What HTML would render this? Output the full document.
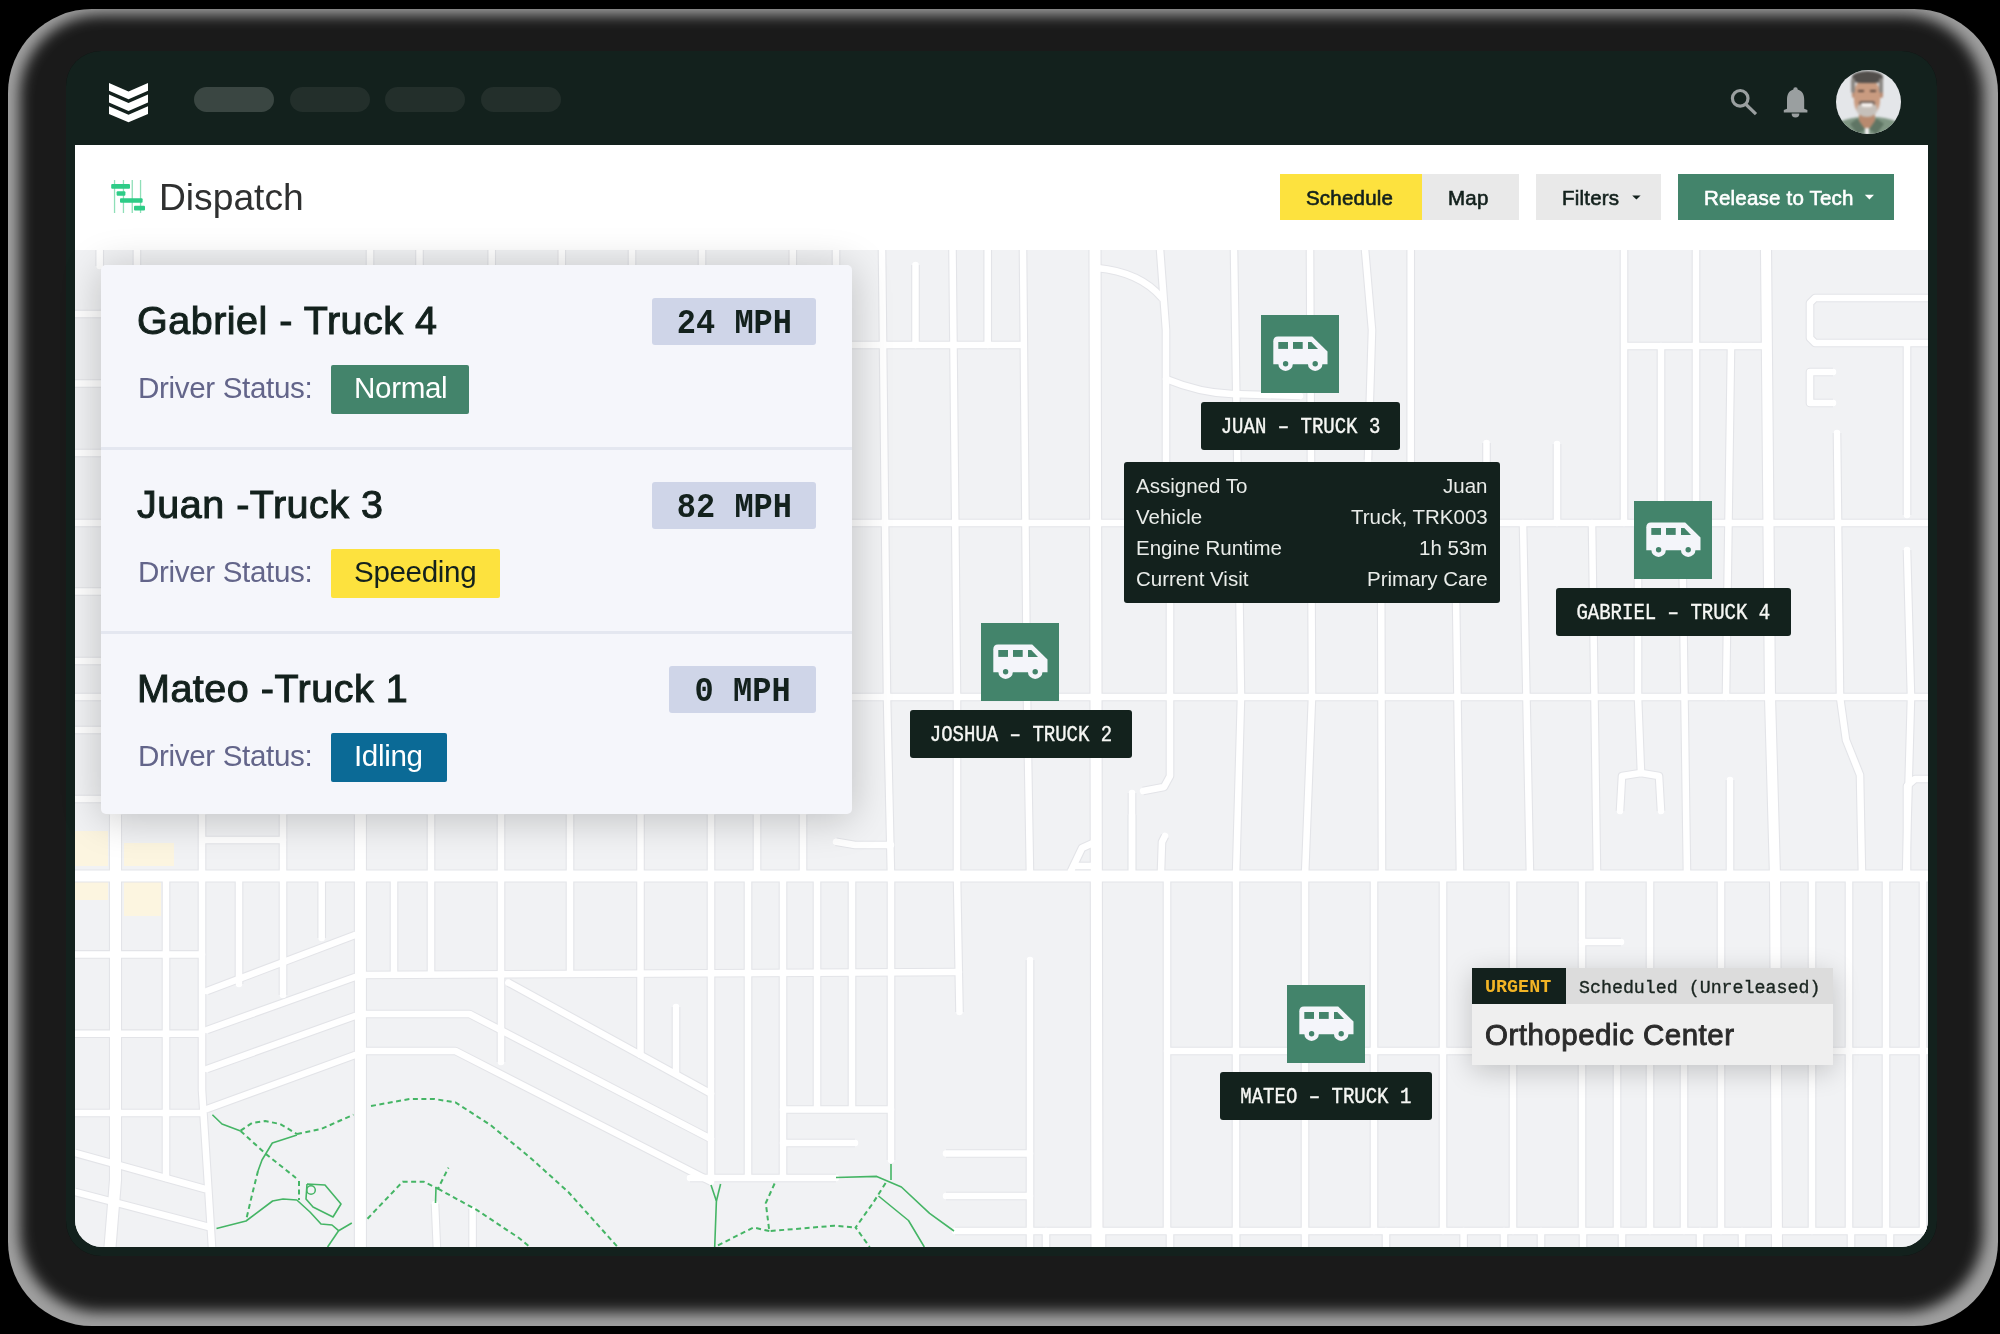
<!DOCTYPE html>
<html><head><meta charset="utf-8">
<style>
html,body{margin:0;padding:0;}
body{width:2000px;height:1334px;background:#000;position:relative;overflow:hidden;font-family:"Liberation Sans",sans-serif;}
.abs{position:absolute;}
.t{position:absolute;white-space:nowrap;line-height:1;will-change:transform;}
#shadow{left:8px;top:9px;width:1990px;height:1317px;border-radius:84px;background:#a0a0a0;overflow:hidden;}
#shadow .in{position:absolute;left:58px;top:42px;width:1871px;height:1205px;border-radius:35px;background:#0f0f0f;box-shadow:0 10px 14px 46px rgba(0,0,0,.84);}
#frame{left:66px;top:51px;width:1871px;height:1205px;border-radius:35px;background:#13211d;}
#content{left:75px;top:145px;width:1853px;height:1102px;border-radius:0 0 27px 27px;background:#f1f2f4;overflow:hidden;}
.pill{position:absolute;top:87px;width:80px;height:25px;border-radius:13px;background:#232f2b;}
.mono{font-family:"Liberation Mono",monospace;}
.btn{position:absolute;top:174px;height:46px;}
.trk{position:absolute;width:78px;height:78px;background:#43846b;}
.trk svg{position:absolute;left:0;top:0;}
.lbl{position:absolute;height:47.6px;background:#13221d;border-radius:3px;}
.lbl span{will-change:transform;position:absolute;left:0;right:0;top:2px;height:47px;line-height:47px;text-align:center;color:#f6f7f4;-webkit-text-stroke:0.35px #f6f7f4;font-family:"Liberation Mono",monospace;font-size:19px;transform:scaleY(1.14);}
.badge{position:absolute;border-radius:2px;}
.ttl{color:#13211d;font-size:39.5px;-webkit-text-stroke:1px #13211d;letter-spacing:0.5px;}
.ds{color:#63658a;font-size:29.6px;letter-spacing:-0.35px;}
.spd{position:absolute;background:#cfd5e8;border-radius:3px;height:47px;}
.spd span{will-change:transform;position:absolute;left:0;right:0;top:1.5px;line-height:47px;transform:scaleY(1.12);text-align:center;font-family:"Liberation Mono",monospace;font-weight:bold;font-size:32px;color:#13211d;}
.tt{color:#e9ece9;font-size:20.5px;}
</style></head>
<body>
<svg width="0" height="0" style="position:absolute">
 <defs>
  <symbol id="van" viewBox="0 0 78 78">
   <path fill="#f4f5fa" d="M12.3,26.3 Q12.3,21.6 17,21.6 L51.2,21.6 L66.5,36.6 L66.5,49.3 L12.3,49.3 Z"/>
   <circle cx="24.6" cy="48.7" r="7.3" fill="#f4f5fa"/>
   <circle cx="54.2" cy="48.7" r="7.3" fill="#f4f5fa"/>
   <circle cx="24.6" cy="48.7" r="2.7" fill="#43846b"/>
   <circle cx="54.2" cy="48.7" r="2.7" fill="#43846b"/>
   <rect x="17.3" y="27" width="9.7" height="6.9" fill="#43846b"/>
   <rect x="32" y="27" width="9.7" height="6.9" fill="#43846b"/>
   <path fill="#43846b" d="M47,27 L50.3,27 L57,33.9 L47,33.9 Z"/>
  </symbol>
 </defs>
</svg>
<div id="shadow" class="abs"><div class="in"></div></div>
<div id="frame" class="abs"></div>
<!-- nav -->
<svg class="abs" style="left:0;top:0" width="200" height="140">
  <g fill="#fff">
    <polygon points="109,83 128.5,91.5 148,83 148,90.8 128.5,99.3 109,90.8"/>
    <polygon points="109,94.6 128.5,103.1 148,94.6 148,102.4 128.5,110.9 109,102.4"/>
    <polygon points="109,106.2 128.5,114.7 148,106.2 148,114 128.5,122.2 109,114"/>
  </g>
</svg>
<div class="pill" style="left:194px;background:#3a4642"></div>
<div class="pill" style="left:290px"></div>
<div class="pill" style="left:385px"></div>
<div class="pill" style="left:481px"></div>
<!-- search / bell -->
<svg class="abs" style="left:1720px;top:70px" width="100" height="60" viewBox="1720 70 100 60">
  <circle cx="1740.2" cy="98.3" r="7.8" fill="none" stroke="#9a9fa0" stroke-width="3.2"/>
  <line x1="1745.5" y1="104" x2="1756" y2="114.2" stroke="#9a9fa0" stroke-width="3.2"/>
  <path fill="#9a9fa0" d="M1795.5,87.3 a2.2,2.2 0 0 1 2.2,2.3 C1802.5,91 1804.2,95 1804.2,100 L1804.2,108.8 L1807.4,110 L1807.4,112.6 L1783.8,112.6 L1783.8,110 L1787,108.8 L1787,100 C1787,95 1788.6,91 1793.3,89.6 a2.2,2.2 0 0 1 2.2,-2.3 Z"/>
  <path fill="#9a9fa0" d="M1791.6,113.6 L1799.4,113.6 A3.9,3.9 0 0 1 1791.6,113.6 Z"/>
</svg>
<!-- avatar -->
<div class="abs" style="left:1836px;top:69.5px;width:64.6px;height:64.6px;border-radius:50%;overflow:hidden;background:#e4e6e9;">
 <div class="abs" style="left:0;top:0;width:65px;height:65px;filter:blur(0.8px);">
  <div class="abs" style="left:-6px;top:47px;width:77px;height:36px;border-radius:45% 45% 0 0;background:#7f9683;"></div>
  <div class="abs" style="left:23px;top:42px;width:16px;height:16px;background:#b88a6f;"></div>
  <div class="abs" style="left:17px;top:50px;width:9px;height:13px;background:#5f7564;transform:rotate(-35deg);"></div>
  <div class="abs" style="left:36px;top:50px;width:9px;height:13px;background:#5f7564;transform:rotate(35deg);"></div>
  <div class="abs" style="left:29px;top:58px;width:4px;height:7px;background:#f0f0f0;"></div>
  <div class="abs" style="left:15.5px;top:19px;width:4px;height:9px;border-radius:2px;background:#b98c73;"></div>
  <div class="abs" style="left:42.5px;top:19px;width:4px;height:9px;border-radius:2px;background:#b98c73;"></div>
  <div class="abs" style="left:18px;top:8px;width:26px;height:38px;border-radius:45% 45% 42% 42%;background:#c99b80;"></div>
  <div class="abs" style="left:21px;top:34px;width:20px;height:13.5px;border-radius:25% 25% 50% 50%;background:#c6c0ba;"></div>
  <div class="abs" style="left:23px;top:31px;width:16px;height:4px;border-radius:2px;background:#6f5f57;"></div>
  <div class="abs" style="left:25px;top:33.5px;width:12px;height:4px;border-radius:1px 1px 4px 4px;background:#f4efec;"></div>
  <div class="abs" style="left:22px;top:20.5px;width:6px;height:2px;background:#5e4a40;"></div>
  <div class="abs" style="left:34px;top:20.5px;width:6px;height:2px;background:#5e4a40;"></div>
  <div class="abs" style="left:15.5px;top:1.5px;width:31px;height:12px;border-radius:50% 50% 30% 30%;background:#524e4b;"></div>
  <div class="abs" style="left:15px;top:8px;width:4px;height:15px;border-radius:2px;background:#8b8783;"></div>
  <div class="abs" style="left:43px;top:8px;width:4px;height:15px;border-radius:2px;background:#8b8783;"></div>
 </div>
</div>

<div id="content" class="abs">
<svg class="abs" style="left:0px;top:104px" width="1853" height="998" viewBox="75 249 1853 998">
<rect x="75" y="249" width="1853" height="998" fill="#f1f2f4"/>
<g fill="#fcf5e0"><rect x="75" y="831" width="33" height="35"/><rect x="124" y="843" width="50" height="23"/><rect x="75" y="879" width="33" height="21"/><rect x="124" y="879" width="37" height="37"/></g>
<g fill="none" stroke="#e3e4e8" stroke-linecap="butt" stroke-linejoin="round"><path d="M75,523 L1928,523" stroke-width="8.7"/><path d="M75,697 L1928,697" stroke-width="8.7"/><path d="M75,876 L1928,876" stroke-width="13.2"/><path d="M1167,1051 L1928,1051" stroke-width="8.7"/><path d="M955,1231 L1928,1231" stroke-width="8.7"/><path d="M852,345 L1020,345" stroke-width="8.7"/><path d="M1626,346 L1766,346" stroke-width="8.7"/><path d="M70,314 L110,314" stroke-width="8.7"/><path d="M70,383.5 L110,383.5" stroke-width="8.7"/><path d="M70,453 L110,453" stroke-width="8.7"/><path d="M70,591.5 L110,591.5" stroke-width="8.7"/><path d="M70,661 L110,661" stroke-width="8.7"/><path d="M70,730 L110,730" stroke-width="8.7"/><path d="M70,799 L110,799" stroke-width="8.7"/><path d="M1928,298 L1815,298 L1810,303 L1810,338 L1815,343 L1928,343" stroke-width="8.7"/><path d="M882,249 L887,697 L891,876 L891,1160" stroke-width="8.7"/><path d="M915.5,265 L915.5,345" stroke-width="8.7"/><path d="M952.5,249 L957,697 L957,876 L959.5,1012" stroke-width="8.7"/><path d="M987.7,249 L987.7,345" stroke-width="8.7"/><path d="M1023,249 L1027,697 L1030,876" stroke-width="8.7"/><path d="M1030,960 L1030,1247" stroke-width="8.7"/><path d="M1095,249 L1096,697 L1097,1247" stroke-width="13.2"/><path d="M1160,249 L1166,330 L1166,520" stroke-width="8.7"/><path d="M1170,523 L1170,776 L1164,787 L1143,791" stroke-width="8.7"/><path d="M1161,871 L1162,842 L1165,836" stroke-width="8.7"/><path d="M1071,871 L1082,848 L1093,843" stroke-width="8.7"/><path d="M1077,866 L1093,866" stroke-width="8.7"/><path d="M1132,793 L1132,871" stroke-width="8.7"/><path d="M1234,249 L1241,697 L1236,876 L1236,1247" stroke-width="8.7"/><path d="M1310,249 L1312,697 L1305,876 L1305,1247" stroke-width="8.7"/><path d="M1365,249 L1372,330 L1368,460" stroke-width="8.7"/><path d="M1381,523 L1382,876" stroke-width="8.7"/><path d="M1374,876 L1374,1231" stroke-width="8.7"/><path d="M1410.7,249 L1410.7,523" stroke-width="8.7"/><path d="M1455,523 L1460,876" stroke-width="8.7"/><path d="M1443,876 L1443,1231" stroke-width="8.7"/><path d="M1486.5,443 L1486.5,523" stroke-width="8.7"/><path d="M1523,523 L1530,876" stroke-width="8.7"/><path d="M1513,876 L1513,1231" stroke-width="8.7"/><path d="M1557,444 L1557,523" stroke-width="8.7"/><path d="M1592,523 L1597,876" stroke-width="8.7"/><path d="M1582,876 L1582,1231" stroke-width="8.7"/><path d="M1624,249 L1624,523" stroke-width="8.7"/><path d="M1638,523 L1638,697" stroke-width="8.7"/><path d="M1650,876 L1650,1231" stroke-width="8.7"/><path d="M1661,346 L1661,523" stroke-width="8.7"/><path d="M1682,523 L1687,876" stroke-width="8.7"/><path d="M1696,249 L1696,346" stroke-width="8.7"/><path d="M1721,876 L1721,1231" stroke-width="8.7"/><path d="M1731,346 L1726,697" stroke-width="8.7"/><path d="M1730,780 L1730,876" stroke-width="8.7"/><path d="M1620,811 L1622,776 L1641,773 L1659,776 L1661,811" stroke-width="8.7"/><path d="M1641,773 L1638,697" stroke-width="8.7"/><path d="M1766,249 L1770,697 L1775,876 L1777,1247" stroke-width="12.2"/><path d="M1812,876 L1812,1231" stroke-width="8.7"/><path d="M1837,433 L1840,697" stroke-width="8.7"/><path d="M1840,697 L1846,740 L1860,775 L1862,876" stroke-width="8.7"/><path d="M1907,876 L1907,786 L1915,779 L1928,779" stroke-width="8.7"/><path d="M1849,876 L1849,1231" stroke-width="8.7"/><path d="M1886,876 L1886,1231" stroke-width="8.7"/><path d="M1907,346 L1907,515" stroke-width="8.7"/><path d="M1907,550 L1911,697 L1906,876" stroke-width="8.7"/><path d="M1923,876 L1923,1231" stroke-width="8.7"/><path d="M1617,1051 L1617,1231" stroke-width="8.7"/><path d="M1167,876 L1167,1231" stroke-width="8.7"/><path d="M1582,942 L1621,942" stroke-width="8.7"/><path d="M1696,346 L1696,523" stroke-width="8.7"/><path d="M1833,372 L1810,372 L1810,403 L1833,403" stroke-width="8.7"/><path d="M1046,1231 L1046,1250" stroke-width="8.7"/><path d="M1102,1231 L1102,1250" stroke-width="8.7"/><path d="M1170,1231 L1170,1250" stroke-width="8.7"/><path d="M1236,1231 L1236,1250" stroke-width="8.7"/><path d="M1386,1231 L1386,1250" stroke-width="8.7"/><path d="M1463.6,1231 L1463.6,1250" stroke-width="8.7"/><path d="M1504,1231 L1504,1250" stroke-width="8.7"/><path d="M1541,1231 L1541,1250" stroke-width="8.7"/><path d="M1583,1231 L1583,1250" stroke-width="8.7"/><path d="M1622,1231 L1622,1250" stroke-width="8.7"/><path d="M1700,1231 L1700,1250" stroke-width="8.7"/><path d="M1742,1231 L1742,1250" stroke-width="8.7"/><path d="M1851,1231 L1851,1250" stroke-width="8.7"/><path d="M1890,1231 L1890,1250" stroke-width="8.7"/><path d="M1684,1051 L1684,1231" stroke-width="8.7"/><path d="M99.7,245 L99.7,266" stroke-width="8.7"/><path d="M136.9,245 L136.9,266" stroke-width="8.7"/><path d="M370,245 L370,266" stroke-width="8.7"/><path d="M419.5,245 L419.5,266" stroke-width="8.7"/><path d="M491.7,245 L491.7,266" stroke-width="8.7"/><path d="M561.8,245 L561.8,266" stroke-width="8.7"/><path d="M632,245 L632,266" stroke-width="8.7"/><path d="M702,245 L702,266" stroke-width="8.7"/><path d="M792.8,245 L792.8,266" stroke-width="8.7"/><path d="M836,245 L836,266" stroke-width="8.7"/><path d="M115.5,815 L115.5,1180 L110,1247" stroke-width="13.2"/><path d="M166,876 L166,1178" stroke-width="8.7"/><path d="M202,815 L202,1090 L212,1247" stroke-width="8.7"/><path d="M239,876 L239,984" stroke-width="8.7"/><path d="M283,815 L283,995" stroke-width="8.7"/><path d="M321.7,876 L321.7,938" stroke-width="8.7"/><path d="M360.4,815 L360.4,1247" stroke-width="13.2"/><path d="M394,876 L394,972" stroke-width="8.7"/><path d="M431,815 L431,972" stroke-width="8.7"/><path d="M501,815 L501,1062" stroke-width="8.7"/><path d="M570,815 L570,970" stroke-width="8.7"/><path d="M640.5,815 L640.5,1055" stroke-width="8.7"/><path d="M676,1007 L676,1072" stroke-width="8.7"/><path d="M711,815 L711,1178" stroke-width="8.7"/><path d="M748,876 L748,1175" stroke-width="8.7"/><path d="M783,876 L783,1175" stroke-width="8.7"/><path d="M817,876 L817,1108" stroke-width="8.7"/><path d="M852,876 L852,1108" stroke-width="8.7"/><path d="M757,815 L757,876" stroke-width="8.7"/><path d="M803,815 L803,876" stroke-width="8.7"/><path d="M1132,815 L1132,876" stroke-width="8.7"/><path d="M75,954.4 L202,954.4" stroke-width="8.7"/><path d="M75,1033.7 L202,1033.7" stroke-width="8.7"/><path d="M75,1113 L202,1113" stroke-width="8.7"/><path d="M205,840 L283,840" stroke-width="8.7"/><path d="M360,975 L959,972" stroke-width="8.7"/><path d="M783,1109.5 L891,1109.5" stroke-width="8.7"/><path d="M783,1143 L855,1143" stroke-width="8.7"/><path d="M946,1153.5 L1030,1153.5" stroke-width="8.7"/><path d="M690,1178 L836,1178" stroke-width="8.7"/><path d="M946,1196 L1030,1196" stroke-width="8.7"/><path d="M207,991 L355,935" stroke-width="8.7"/><path d="M207,1030 L355,977" stroke-width="8.7"/><path d="M207,1069 L355,1016" stroke-width="8.7"/><path d="M207,1109 L355,1055" stroke-width="8.7"/><path d="M75,1153 L205,1189" stroke-width="8.7"/><path d="M75,1192 L209,1227" stroke-width="8.7"/><path d="M508.4,982.6 L711,1093.6" stroke-width="8.7"/><path d="M366,1014 L469.6,1014 L711,1139" stroke-width="8.7"/><path d="M366,1051 L455.5,1051 L711,1181.7" stroke-width="8.7"/><path d="M836,841.7 L855,845 L891,845" stroke-width="8.7"/><path d="M435,1204 L437,1250" stroke-width="8.7"/><path d="M472.6,1209 L472.6,1250" stroke-width="8.7"/><path d="M1097,268 Q1140,272 1162,298" stroke-width="8.7"/><path d="M1166,379 Q1200,393 1232,394 L1300,396" stroke-width="8.7"/></g>
<g fill="none" stroke="#ffffff" stroke-linecap="round" stroke-linejoin="round"><path d="M75,523 L1928,523" stroke-width="6.5"/><path d="M75,697 L1928,697" stroke-width="6.5"/><path d="M75,876 L1928,876" stroke-width="11"/><path d="M1167,1051 L1928,1051" stroke-width="6.5"/><path d="M955,1231 L1928,1231" stroke-width="6.5"/><path d="M852,345 L1020,345" stroke-width="6.5"/><path d="M1626,346 L1766,346" stroke-width="6.5"/><path d="M70,314 L110,314" stroke-width="6.5"/><path d="M70,383.5 L110,383.5" stroke-width="6.5"/><path d="M70,453 L110,453" stroke-width="6.5"/><path d="M70,591.5 L110,591.5" stroke-width="6.5"/><path d="M70,661 L110,661" stroke-width="6.5"/><path d="M70,730 L110,730" stroke-width="6.5"/><path d="M70,799 L110,799" stroke-width="6.5"/><path d="M1928,298 L1815,298 L1810,303 L1810,338 L1815,343 L1928,343" stroke-width="6.5"/><path d="M882,249 L887,697 L891,876 L891,1160" stroke-width="6.5"/><path d="M915.5,265 L915.5,345" stroke-width="6.5"/><path d="M952.5,249 L957,697 L957,876 L959.5,1012" stroke-width="6.5"/><path d="M987.7,249 L987.7,345" stroke-width="6.5"/><path d="M1023,249 L1027,697 L1030,876" stroke-width="6.5"/><path d="M1030,960 L1030,1247" stroke-width="6.5"/><path d="M1095,249 L1096,697 L1097,1247" stroke-width="11"/><path d="M1160,249 L1166,330 L1166,520" stroke-width="6.5"/><path d="M1170,523 L1170,776 L1164,787 L1143,791" stroke-width="6.5"/><path d="M1161,871 L1162,842 L1165,836" stroke-width="6.5"/><path d="M1071,871 L1082,848 L1093,843" stroke-width="6.5"/><path d="M1077,866 L1093,866" stroke-width="6.5"/><path d="M1132,793 L1132,871" stroke-width="6.5"/><path d="M1234,249 L1241,697 L1236,876 L1236,1247" stroke-width="6.5"/><path d="M1310,249 L1312,697 L1305,876 L1305,1247" stroke-width="6.5"/><path d="M1365,249 L1372,330 L1368,460" stroke-width="6.5"/><path d="M1381,523 L1382,876" stroke-width="6.5"/><path d="M1374,876 L1374,1231" stroke-width="6.5"/><path d="M1410.7,249 L1410.7,523" stroke-width="6.5"/><path d="M1455,523 L1460,876" stroke-width="6.5"/><path d="M1443,876 L1443,1231" stroke-width="6.5"/><path d="M1486.5,443 L1486.5,523" stroke-width="6.5"/><path d="M1523,523 L1530,876" stroke-width="6.5"/><path d="M1513,876 L1513,1231" stroke-width="6.5"/><path d="M1557,444 L1557,523" stroke-width="6.5"/><path d="M1592,523 L1597,876" stroke-width="6.5"/><path d="M1582,876 L1582,1231" stroke-width="6.5"/><path d="M1624,249 L1624,523" stroke-width="6.5"/><path d="M1638,523 L1638,697" stroke-width="6.5"/><path d="M1650,876 L1650,1231" stroke-width="6.5"/><path d="M1661,346 L1661,523" stroke-width="6.5"/><path d="M1682,523 L1687,876" stroke-width="6.5"/><path d="M1696,249 L1696,346" stroke-width="6.5"/><path d="M1721,876 L1721,1231" stroke-width="6.5"/><path d="M1731,346 L1726,697" stroke-width="6.5"/><path d="M1730,780 L1730,876" stroke-width="6.5"/><path d="M1620,811 L1622,776 L1641,773 L1659,776 L1661,811" stroke-width="6.5"/><path d="M1641,773 L1638,697" stroke-width="6.5"/><path d="M1766,249 L1770,697 L1775,876 L1777,1247" stroke-width="10"/><path d="M1812,876 L1812,1231" stroke-width="6.5"/><path d="M1837,433 L1840,697" stroke-width="6.5"/><path d="M1840,697 L1846,740 L1860,775 L1862,876" stroke-width="6.5"/><path d="M1907,876 L1907,786 L1915,779 L1928,779" stroke-width="6.5"/><path d="M1849,876 L1849,1231" stroke-width="6.5"/><path d="M1886,876 L1886,1231" stroke-width="6.5"/><path d="M1907,346 L1907,515" stroke-width="6.5"/><path d="M1907,550 L1911,697 L1906,876" stroke-width="6.5"/><path d="M1923,876 L1923,1231" stroke-width="6.5"/><path d="M1617,1051 L1617,1231" stroke-width="6.5"/><path d="M1167,876 L1167,1231" stroke-width="6.5"/><path d="M1582,942 L1621,942" stroke-width="6.5"/><path d="M1696,346 L1696,523" stroke-width="6.5"/><path d="M1833,372 L1810,372 L1810,403 L1833,403" stroke-width="6.5"/><path d="M1046,1231 L1046,1250" stroke-width="6.5"/><path d="M1102,1231 L1102,1250" stroke-width="6.5"/><path d="M1170,1231 L1170,1250" stroke-width="6.5"/><path d="M1236,1231 L1236,1250" stroke-width="6.5"/><path d="M1386,1231 L1386,1250" stroke-width="6.5"/><path d="M1463.6,1231 L1463.6,1250" stroke-width="6.5"/><path d="M1504,1231 L1504,1250" stroke-width="6.5"/><path d="M1541,1231 L1541,1250" stroke-width="6.5"/><path d="M1583,1231 L1583,1250" stroke-width="6.5"/><path d="M1622,1231 L1622,1250" stroke-width="6.5"/><path d="M1700,1231 L1700,1250" stroke-width="6.5"/><path d="M1742,1231 L1742,1250" stroke-width="6.5"/><path d="M1851,1231 L1851,1250" stroke-width="6.5"/><path d="M1890,1231 L1890,1250" stroke-width="6.5"/><path d="M1684,1051 L1684,1231" stroke-width="6.5"/><path d="M99.7,245 L99.7,266" stroke-width="6.5"/><path d="M136.9,245 L136.9,266" stroke-width="6.5"/><path d="M370,245 L370,266" stroke-width="6.5"/><path d="M419.5,245 L419.5,266" stroke-width="6.5"/><path d="M491.7,245 L491.7,266" stroke-width="6.5"/><path d="M561.8,245 L561.8,266" stroke-width="6.5"/><path d="M632,245 L632,266" stroke-width="6.5"/><path d="M702,245 L702,266" stroke-width="6.5"/><path d="M792.8,245 L792.8,266" stroke-width="6.5"/><path d="M836,245 L836,266" stroke-width="6.5"/><path d="M115.5,815 L115.5,1180 L110,1247" stroke-width="11"/><path d="M166,876 L166,1178" stroke-width="6.5"/><path d="M202,815 L202,1090 L212,1247" stroke-width="6.5"/><path d="M239,876 L239,984" stroke-width="6.5"/><path d="M283,815 L283,995" stroke-width="6.5"/><path d="M321.7,876 L321.7,938" stroke-width="6.5"/><path d="M360.4,815 L360.4,1247" stroke-width="11"/><path d="M394,876 L394,972" stroke-width="6.5"/><path d="M431,815 L431,972" stroke-width="6.5"/><path d="M501,815 L501,1062" stroke-width="6.5"/><path d="M570,815 L570,970" stroke-width="6.5"/><path d="M640.5,815 L640.5,1055" stroke-width="6.5"/><path d="M676,1007 L676,1072" stroke-width="6.5"/><path d="M711,815 L711,1178" stroke-width="6.5"/><path d="M748,876 L748,1175" stroke-width="6.5"/><path d="M783,876 L783,1175" stroke-width="6.5"/><path d="M817,876 L817,1108" stroke-width="6.5"/><path d="M852,876 L852,1108" stroke-width="6.5"/><path d="M757,815 L757,876" stroke-width="6.5"/><path d="M803,815 L803,876" stroke-width="6.5"/><path d="M1132,815 L1132,876" stroke-width="6.5"/><path d="M75,954.4 L202,954.4" stroke-width="6.5"/><path d="M75,1033.7 L202,1033.7" stroke-width="6.5"/><path d="M75,1113 L202,1113" stroke-width="6.5"/><path d="M205,840 L283,840" stroke-width="6.5"/><path d="M360,975 L959,972" stroke-width="6.5"/><path d="M783,1109.5 L891,1109.5" stroke-width="6.5"/><path d="M783,1143 L855,1143" stroke-width="6.5"/><path d="M946,1153.5 L1030,1153.5" stroke-width="6.5"/><path d="M690,1178 L836,1178" stroke-width="6.5"/><path d="M946,1196 L1030,1196" stroke-width="6.5"/><path d="M207,991 L355,935" stroke-width="6.5"/><path d="M207,1030 L355,977" stroke-width="6.5"/><path d="M207,1069 L355,1016" stroke-width="6.5"/><path d="M207,1109 L355,1055" stroke-width="6.5"/><path d="M75,1153 L205,1189" stroke-width="6.5"/><path d="M75,1192 L209,1227" stroke-width="6.5"/><path d="M508.4,982.6 L711,1093.6" stroke-width="6.5"/><path d="M366,1014 L469.6,1014 L711,1139" stroke-width="6.5"/><path d="M366,1051 L455.5,1051 L711,1181.7" stroke-width="6.5"/><path d="M836,841.7 L855,845 L891,845" stroke-width="6.5"/><path d="M435,1204 L437,1250" stroke-width="6.5"/><path d="M472.6,1209 L472.6,1250" stroke-width="6.5"/><path d="M1097,268 Q1140,272 1162,298" stroke-width="6.5"/><path d="M1166,379 Q1200,393 1232,394 L1300,396" stroke-width="6.5"/></g>
<g fill="none" stroke="#45b565" stroke-width="1.6" stroke-linejoin="round"><path d="M212.4,1114.7 L222,1124 L240.6,1131"/><path d="M297,1135 L272.3,1143 L262,1160 L258,1171"/><path d="M216.5,1228.5 L246,1221 L272.6,1201 L283,1199 L296.8,1200 L310,1212 L321,1224 L332,1225 L338.6,1230.7 L351.8,1223"/><path d="M307,1184 L325,1185 L341,1204 L333,1217 L313,1207 L306,1199 L307,1184"/><path d="M338.6,1230.7 L327.6,1247"/><path d="M836,1177.5 L876.7,1176.4 L901.4,1187 L929.6,1213.4 L954,1231"/><path d="M891,1164 L891,1180"/><path d="M878.5,1196 L908.5,1220.5 L924.3,1247"/><path d="M711,1185 L716.4,1201 L714.7,1247"/><path d="M720.6,1184 L716.4,1201"/><path d="M436,1187 L435.5,1203"/></g>
<g fill="none" stroke="#45b565" stroke-width="2" stroke-dasharray="5 3.5"><path d="M240.6,1130.6 L252,1123 L265.3,1121 L280,1124 L297,1134"/><path d="M258,1171 L252,1195 L246,1220.5"/><path d="M240.6,1131 L265.3,1153.5 L296,1178"/><path d="M299,1181 L299,1200"/><path d="M297,1134 L321.7,1128.8 L353.4,1114.7"/><path d="M371,1106 L409.7,1099 L434.4,1099 L455.5,1102.4 L490.8,1125.3 L529.5,1157 L568.3,1192 L617.6,1247"/><path d="M367.5,1218.7 L402.7,1181.7 L423.8,1181.7 L438,1188.7 L448.5,1167.6"/><path d="M438,1188.7 L476.7,1209.9 L519,1238 L530,1247"/><path d="M885.6,1183 L873,1203 L855.6,1227.5 L869.7,1247"/><path d="M774.6,1183.5 L765.8,1203 L769.3,1231 L795.7,1229 L834.5,1225.7 L855.6,1227.5"/><path d="M769.3,1231 L753.4,1227.5 L714.7,1247"/></g>
<circle cx="311" cy="1190" r="4.3" fill="none" stroke="#45b565" stroke-width="1.5"/>
</svg>
</div>
<!-- header -->
<div class="abs" style="left:75px;top:145px;width:1853px;height:105px;background:#fff;"></div>
<svg class="abs" style="left:105px;top:175px" width="50" height="45" viewBox="105 175 50 45">
  <g fill="#8fdfb8"><rect x="113.9" y="180" width="1.3" height="33"/><rect x="122.8" y="180" width="1.3" height="33"/><rect x="131.6" y="180" width="1.3" height="33"/><rect x="139.9" y="180" width="1.3" height="33"/></g>
  <g fill="#2ecc87"><rect x="111.2" y="184.1" width="18.8" height="4.6" rx="1"/><rect x="116.6" y="191.2" width="8.8" height="4.5" rx="1"/><rect x="120" y="198.3" width="22.6" height="4.5" rx="1"/><rect x="134" y="205.7" width="11" height="4.7" rx="1"/></g>
</svg>
<div class="t" style="left:159px;top:178.5px;font-size:37.2px;color:#2f3030;">Dispatch</div>

<div class="btn" style="left:1280px;width:142px;background:#fde23e;"></div>
<div class="btn" style="left:1422px;width:96.6px;background:#e9e9e9;"></div>
<div class="btn" style="left:1535.6px;width:125.4px;background:#e9e9e9;"></div>
<div class="btn" style="left:1678px;width:216px;background:#43846b;"></div>
<div class="t" style="left:1306px;top:187.5px;font-size:20.5px;color:#13211d;-webkit-text-stroke:0.6px #13211d;letter-spacing:0.2px;">Schedule</div>
<div class="t" style="left:1448px;top:187.5px;font-size:20.5px;color:#13211d;-webkit-text-stroke:0.6px #13211d;letter-spacing:0.2px;">Map</div>
<div class="t" style="left:1562px;top:187.5px;font-size:20.5px;color:#13211d;-webkit-text-stroke:0.6px #13211d;letter-spacing:0.2px;">Filters</div>
<div class="t" style="left:1704px;top:187.5px;font-size:20.5px;color:#fff;-webkit-text-stroke:0.6px #fff;letter-spacing:0.2px;">Release to Tech</div>
<svg class="abs" style="left:1620px;top:190px" width="260" height="15" viewBox="1620 190 260 15">
  <polygon points="1632.2,195.5 1640.6,195.5 1636.4,199.6" fill="#13211d"/>
  <polygon points="1864.8,194.8 1874,194.8 1869.4,199.6" fill="#fff"/>
</svg>

<!-- card -->
<div class="abs" style="left:101px;top:265px;width:751px;height:549px;border-radius:5px;background:#f5f6fb;box-shadow:0 4px 40px rgba(0,0,0,.22);">
  <div class="abs" style="left:0;top:182px;width:751px;height:3px;background:#e4e7f0;"></div>
  <div class="abs" style="left:0;top:366px;width:751px;height:3px;background:#e4e7f0;"></div>
</div>
<div class="t ttl" style="left:137px;top:301.4px;">Gabriel - Truck 4</div>
<div class="t ds" style="left:137.5px;top:372.6px;">Driver Status:</div>
<div class="badge" style="left:331.4px;top:365px;width:138px;height:48.6px;background:#43846b;"></div>
<div class="t" style="left:354px;top:372.6px;font-size:29.6px;letter-spacing:-0.35px;color:#fff;">Normal</div>
<div class="spd" style="left:651.5px;top:298px;width:164.8px;"><span>24 MPH</span></div>

<div class="t ttl" style="left:137px;top:485.4px;">Juan -Truck 3</div>
<div class="t ds" style="left:137.5px;top:556.6px;">Driver Status:</div>
<div class="badge" style="left:331.4px;top:549px;width:168.3px;height:48.6px;background:#fde23e;"></div>
<div class="t" style="left:354px;top:556.6px;font-size:29.6px;letter-spacing:-0.35px;color:#13211d;">Speeding</div>
<div class="spd" style="left:651.5px;top:482px;width:164.8px;"><span>82 MPH</span></div>

<div class="t ttl" style="left:137px;top:669.4px;">Mateo -Truck 1</div>
<div class="t ds" style="left:137.5px;top:740.6px;">Driver Status:</div>
<div class="badge" style="left:331px;top:733px;width:115.8px;height:49px;background:#0b6a96;"></div>
<div class="t" style="left:354px;top:740.6px;font-size:29.6px;letter-spacing:-0.35px;color:#fff;">Idling</div>
<div class="spd" style="left:668.8px;top:666px;width:147.2px;"><span>0 MPH</span></div>

<!-- trucks -->
<div class="trk" style="left:1261px;top:315px;"><svg width="78" height="78"><use href="#van"/></svg></div>
<div class="lbl" style="left:1201px;top:402px;width:199px;"><span>JUAN – TRUCK 3</span></div>
<div class="trk" style="left:1634.3px;top:501.4px;"><svg width="78" height="78"><use href="#van"/></svg></div>
<div class="lbl" style="left:1556.3px;top:588.4px;width:234.6px;"><span>GABRIEL – TRUCK 4</span></div>
<div class="trk" style="left:981.4px;top:623px;"><svg width="78" height="78"><use href="#van"/></svg></div>
<div class="lbl" style="left:909.6px;top:710px;width:222px;"><span>JOSHUA – TRUCK 2</span></div>
<div class="trk" style="left:1286.8px;top:985px;"><svg width="78" height="78"><use href="#van"/></svg></div>
<div class="lbl" style="left:1220.2px;top:1072px;width:211.6px;"><span>MATEO – TRUCK 1</span></div>

<!-- tooltip -->
<div class="abs" style="left:1124.3px;top:462px;width:375.8px;height:140.7px;background:#13211d;border-radius:3px;"></div>
<div class="t tt" style="left:1136px;top:476px;">Assigned To</div>
<div class="t tt" style="left:1136px;top:507px;">Vehicle</div>
<div class="t tt" style="left:1136px;top:538px;">Engine Runtime</div>
<div class="t tt" style="left:1136px;top:569px;">Current Visit</div>
<div class="t tt" style="right:512.7px;top:476px;">Juan</div>
<div class="t tt" style="right:512.7px;top:507px;">Truck, TRK003</div>
<div class="t tt" style="right:512.7px;top:538px;">1h 53m</div>
<div class="t tt" style="right:512.7px;top:569px;">Primary Care</div>

<!-- urgent card -->
<div class="abs" style="left:1472px;top:968px;width:361px;height:97px;background:#efefef;box-shadow:0 6px 26px rgba(0,0,0,.20);">
  <div class="abs" style="left:0;top:0;width:361px;height:36.3px;background:#dcdcdc;"></div>
  <div class="abs" style="left:0;top:0;width:93.8px;height:36.3px;background:#13211d;"></div>
</div>
<div class="t mono" style="left:1485px;top:979px;font-size:18.4px;font-weight:bold;color:#f2b425;">URGENT</div>
<div class="t mono" style="left:1579px;top:979px;font-size:18.3px;color:#1a2520;-webkit-text-stroke:0.35px #1a2520;">Scheduled (Unreleased)</div>
<div class="t" style="left:1485px;top:1020px;font-size:29.5px;color:#2b2b2b;-webkit-text-stroke:0.9px #2b2b2b;letter-spacing:0.5px;">Orthopedic Center</div>
</body></html>
